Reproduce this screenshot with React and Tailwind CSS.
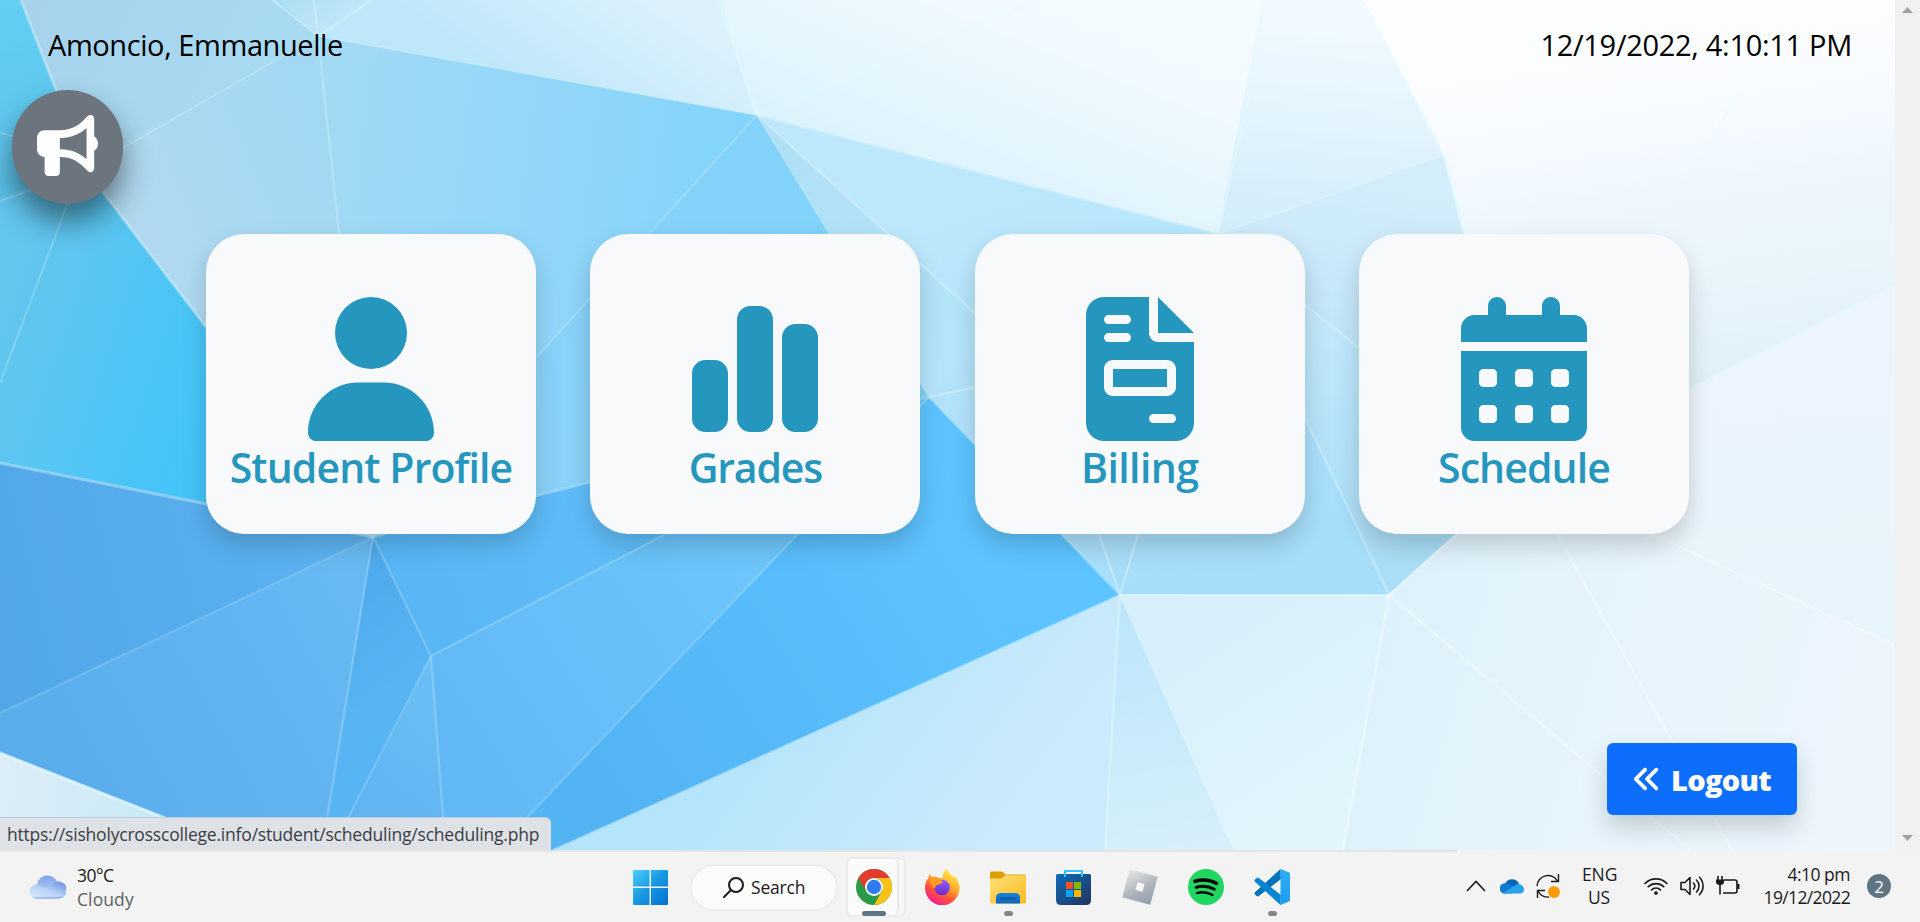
import React from "react";
import {
  FaUser,
  FaChartSimple,
  FaFileInvoice,
  FaCalendarDays,
  FaBullhorn,
  FaAnglesLeft,
} from "react-icons/fa6";

/* Facets of the low-poly wallpaper: points, gradient vector, gradient stops */
const FACETS = [
  { p: "-5,-5 21,-5 21,0 56,90 82,165 0,205 -5,205", g: [0, 0, 40, 200], c: ["#63cff4", "#5cc1ea"] },
  { p: "-5,200 82,165 210,332 210,504 0,463 -5,463", g: [0, 330, 205, 400], c: ["#62c6ef", "#45c4f8"] },
  { p: "21,-5 273,-5 318,36 123,148 82,165 56,90 21,0", g: [40, 0, 240, 100], c: ["#a6d3eb", "#a8daf2"] },
  { p: "82,165 318,36 345,260 373,537 210,505 206,327", g: [110, 250, 340, 150], c: ["#b2d9ef", "#a2d8f4"] },
  { p: "318,36 757,115 373,537 345,260", g: [330, 150, 740, 200], c: ["#a2d9f5", "#83d4fb"] },
  { p: "757,115 929,397 373,537", g: [830, 250, 540, 430], c: ["#82d2fa", "#8ad2f8"] },
  { p: "273,-5 314,-5 318,36", g: [273, 0, 318, 36], c: ["#a9ddf3", "#bfe6f6"] },
  { p: "314,-5 376,-5 318,36", g: [314, 0, 340, 30], c: ["#b2e1f6", "#c0e7f8"] },
  { p: "372,-5 719,-5 719,0 757,115 318,36", g: [640, -10, 560, 110], c: ["#dcf1fc", "#bfe7fa"] },
  { p: "719,-5 1264,-5 1218,234 757,115", g: [1040, 0, 960, 200], c: ["#f4fbff", "#dbf2fc"] },
  { p: "1264,-5 1363,-5 1363,0 1444,155 1218,234", g: [1320, 0, 1300, 210], c: ["#f4fbff", "#d5eefb"] },
  { p: "1218,234 1444,155 1464,233 1540,460 1389,595", g: [1400, 180, 1340, 560], c: ["#d4edfa", "#a6dcf7"] },
  { p: "757,115 1218,234 1389,595 1120,595 929,397", g: [1010, 170, 1150, 590], c: ["#bde8fc", "#a6ddfa"] },
  { p: "1218,234 1389,595 1500,495 1359,348", g: [1280, 250, 1360, 560], c: ["#cdecfa", "#b8e4fa", "#a9def6"] },
  { p: "757,115 920,263 990,327 929,397", g: [780, 150, 950, 350], c: ["#b0e0f6", "#b4e5fb"] },
  { p: "1363,-5 1900,-5 1900,284 1689,389 1540,460 1464,233 1444,155 1363,0", g: [1580, 0, 1640, 400], c: ["#fefeff", "#f9fcfe", "#eff7fe", "#e9f4fb", "#def1f7"] },
  { p: "1900,284 1900,860 1342,860 1389,595 1540,460 1689,389", g: [1380, 560, 1870, 700], c: ["#dcf1fa", "#e6f4fb", "#edf5fd"] },
  { p: "1900,284 1900,645 1651,534 1600,430 1689,389", g: [1780, 340, 1800, 600], c: ["#edf5fe", "#e8f4fb"] },
  { p: "1120,595 1389,595 1342,860 1238,860", g: [1150, 610, 1310, 850], c: ["#d6effb", "#e2f5fc"] },
  { p: "1120,595 1238,860 1104,860", g: [1130, 620, 1170, 850], c: ["#bde6fb", "#d6effa"] },
  { p: "1120,595 1104,860 530,862", g: [780, 700, 980, 850], c: ["#b5e5fb", "#cbeafb"] },
  { p: "929,397 1120,595 551,851 530,862 480,862 525,818", g: [600, 760, 980, 520], c: ["#53b4f4", "#5dc4ff"] },
  { p: "373,537 929,397 664,535 431,656", g: [400, 560, 760, 470], c: ["#59b6f5", "#62c1fb"] },
  { p: "431,656 664,535 929,397 525,818 485,860 446,860", g: [450, 750, 740, 560], c: ["#62b8f4", "#6dc5fb"] },
  { p: "431,656 446,860 330,860", g: [380, 800, 440, 720], c: ["#62b5f1", "#69bcf4"] },
  { p: "373,537 431,656 330,860 322,860", g: [350, 600, 410, 680], c: ["#50abec", "#58b5f4"] },
  { p: "373,537 322,860 270,860 0,753 -5,753 -5,714 0,713", g: [60, 760, 350, 600], c: ["#5aaceb", "#67b9f3"] },
  { p: "-5,462 0,463 206,503 373,537 0,713 -5,715", g: [0, 600, 330, 520], c: ["#52a7e8", "#5cb2f0"] },
  { p: "-5,751 0,753 165,818 250,860 -5,860", g: [0, 800, 160, 830], c: ["#dcedf8", "#c8e9f5"] },
];

/* Bright ridges between facets: x1, y1, x2, y2, opacity, width */
const RIDGES = [
  [21, 0, 56, 90, 0.35, 3],
  [56, 90, 82, 165, 0.35, 2],
  [82, 165, 206, 327, 0.35, 3],
  [82, 165, 0, 383, 0.25, 2],
  [0, 201, 82, 172, 0.25, 2],
  [0, 133, 30, 140, 0.25, 2],
  [273, 0, 318, 36, 0.45, 2],
  [314, 0, 318, 36, 0.4, 2],
  [372, 0, 318, 36, 0.45, 2],
  [318, 36, 123, 148, 0.25, 2],
  [318, 36, 339, 233, 0.3, 2],
  [318, 36, 757, 115, 0.2, 2],
  [719, 0, 757, 115, 0.6, 3],
  [757, 115, 1040, 0, 0.3, 3],
  [757, 115, 373, 537, 0.25, 2],
  [757, 115, 929, 397, 0.12, 2],
  [757, 115, 990, 327, 0.4, 2.5],
  [757, 115, 1218, 234, 0.3, 3],
  [1218, 234, 1252, 80, 0.45, 3],
  [1252, 80, 1264, 0, 0.3, 3],
  [1218, 234, 1444, 155, 0.4, 2],
  [1363, 0, 1444, 155, 0.3, 3],
  [1444, 155, 1464, 233, 0.75, 3],
  [1218, 234, 1389, 595, 0.35, 2.5],
  [1218, 234, 1359, 348, 0.35, 2.5],
  [1660, 233, 1740, 90, 0.3, 3],
  [1689, 389, 1895, 286, 0.5, 2.5],
  [929, 397, 1010, 380, 0.4, 2.5],
  [929, 397, 1120, 595, 0.35, 2.5],
  [1120, 595, 1099, 534, 0.45, 2],
  [1120, 595, 1138, 534, 0.45, 2],
  [1120, 595, 1389, 595, 0.6, 2],
  [1120, 595, 1234, 850, 0.4, 2],
  [1120, 595, 1105, 850, 0.45, 2.5],
  [1120, 595, 551, 851, 0.45, 2],
  [1389, 595, 1457, 534, 0.6, 2.5],
  [1389, 595, 1343, 850, 0.45, 3],
  [1389, 595, 1690, 850, 0.45, 3],
  [1557, 534, 1732, 850, 0.5, 3],
  [1651, 534, 1895, 645, 0.5, 3],
  [373, 537, 929, 397, 0.35, 2.5],
  [0, 463, 373, 537, 0.4, 3],
  [373, 537, 0, 713, 0.18, 2],
  [373, 537, 325, 830, 0.22, 2],
  [373, 537, 431, 656, 0.25, 2],
  [431, 656, 664, 535, 0.25, 2],
  [431, 656, 343, 828, 0.25, 2],
  [431, 656, 444, 830, 0.25, 2],
  [929, 397, 515, 830, 0.25, 2],
  [0, 753, 175, 822, 0.7, 3],
];

function Wallpaper() {
  return (
    <svg
      className="absolute inset-0 h-full w-full"
      viewBox="0 0 1895 850"
      preserveAspectRatio="none"
      aria-hidden="true"
    >
      <defs>
        <filter id="soft" x="0" y="0" width="1" height="1">
          <feGaussianBlur stdDeviation="0.7" />
        </filter>
        {FACETS.map((f, i) => (
          <linearGradient
            key={i}
            id={`facet${i}`}
            gradientUnits="userSpaceOnUse"
            x1={f.g[0]}
            y1={f.g[1]}
            x2={f.g[2]}
            y2={f.g[3]}
          >
            {f.c.map((c, j) => (
              <stop key={j} offset={j / (f.c.length - 1)} stopColor={c} />
            ))}
          </linearGradient>
        ))}
      </defs>
      <rect width="1895" height="850" fill="#a9dcf6" />
      <g filter="url(#soft)">
        {FACETS.map((f, i) => (
          <polygon key={i} points={f.p} fill={`url(#facet${i})`} stroke={`url(#facet${i})`} strokeWidth="0.8" />
        ))}
        {RIDGES.map(([x1, y1, x2, y2, o, w], i) => (
          <line key={i} x1={x1} y1={y1} x2={x2} y2={y2} stroke={x1 > 1380 && y1 > 500 ? "#f4fcff" : "#e2fbff"} strokeOpacity={o} strokeWidth={w} />
        ))}
      </g>
    </svg>
  );
}

const CARDS = [
  { label: "Student Profile", Icon: FaUser, track: "tracking-[-0.9px]" },
  { label: "Grades", Icon: FaChartSimple, track: "tracking-[-1.2px]" },
  { label: "Billing", Icon: FaFileInvoice, track: "tracking-[-0.6px]" },
  { label: "Schedule", Icon: FaCalendarDays, track: "tracking-[-0.9px]" },
];

function MenuCard({ label, Icon, track }) {
  return (
    <a className="flex h-[300px] w-[330px] flex-col items-center rounded-[38px] bg-[#f8f9fa] pt-[63px] text-[#2596be] shadow-[0_12px_24px_rgba(0,0,0,0.17)]">
      <Icon className="h-[144px] w-auto shrink-0" />
      <span className={`-mt-px whitespace-nowrap text-[41px] leading-[54px] font-semibold ${track}`}>{label}</span>
    </a>
  );
}

function ScrollBar() {
  return (
    <div className="flex w-[25px] flex-col items-center justify-between bg-[#f1f1f1] pt-[7px] pb-[9px]">
      <svg width="11" height="6" viewBox="0 0 11 6"><path d="M5.5 0 11 6H0z" fill="#a3a3a3" /></svg>
      <svg width="11" height="6" viewBox="0 0 11 6"><path d="M5.5 6 11 0H0z" fill="#a3a3a3" /></svg>
    </div>
  );
}

function CloudIcon() {
  return (
    <svg width="36" height="24" viewBox="0 0 36 24">
      <defs>
        <linearGradient id="cl1" x1="0" y1="0" x2="0" y2="1">
          <stop offset="0" stopColor="#7fa4e8" />
          <stop offset="1" stopColor="#c4daf8" />
        </linearGradient>
        <linearGradient id="cl2" x1="1" y1="0" x2="0.2" y2="1">
          <stop offset="0" stopColor="#5f8bdd" />
          <stop offset="0.6" stopColor="#bcd4f7" />
          <stop offset="1" stopColor="#d3e4fb" />
        </linearGradient>
      </defs>
      <path d="M7 23.5a7 7 0 0 1 0-14A10.5 10.5 0 0 1 27.500 8L28 23.500z" fill="url(#cl1)" />
      <path d="M7 23.500a7 7 0 1 1 5-12l8 3a8.500 8.500 0 1 1 7.500 9z" fill="url(#cl2)" />
      <path d="M3 22q2 1.500 4 1.500h20q5 0 7-3-3 2-7 2H7q-2 0-4-.500z" fill="#7ba0e6" />
    </svg>
  );
}

function StartIcon() {
  return (
    <svg width="35" height="35" viewBox="0 0 35 35">
      <defs>
        <linearGradient id="win" gradientUnits="userSpaceOnUse" x1="0" y1="0" x2="35" y2="35">
          <stop offset="0" stopColor="#4bd0fb" />
          <stop offset="0.5" stopColor="#1797e3" />
          <stop offset="1" stopColor="#0070d0" />
        </linearGradient>
      </defs>
      <path d="M1 0h15.500v16.500H0V1a1 1 0 0 1 1-1zM18 0h16a1 1 0 0 1 1 1v15.500H18zM0 18h16.500v17H1a1 1 0 0 1-1-1zM18 18h17v16a1 1 0 0 1-1 1H18z" fill="url(#win)" />
    </svg>
  );
}

function ChromeIcon() {
  return (
    <svg width="36" height="36" viewBox="0 0 36 36" className="shrink-0">
      <circle cx="18" cy="18" r="18" fill="#2b9a48" />
      <path d="M2.400 9A18 18 0 0 1 33.600 9H18a9 9 0 0 0-7.800 13.500z" fill="#e33b2e" />
      <path d="M33.600 9A18 18 0 0 1 18 36l7.800-13.500A9 9 0 0 0 18 9z" fill="#fcc117" />
      <circle cx="18" cy="18" r="9" fill="#fff" />
      <circle cx="18" cy="18" r="7.200" fill="#2f7cf0" />
    </svg>
  );
}

function FirefoxIcon() {
  return (
    <svg width="35" height="36" viewBox="0 0 35 36">
      <defs>
        <linearGradient id="ff1" x1="0.800" y1="0.050" x2="0.250" y2="1">
          <stop offset="0" stopColor="#fff14a" />
          <stop offset="0.350" stopColor="#ffb02e" />
          <stop offset="0.650" stopColor="#ff5636" />
          <stop offset="1" stopColor="#f5149a" />
        </linearGradient>
        <linearGradient id="ff2" x1="0.600" y1="0" x2="0.400" y2="1">
          <stop offset="0" stopColor="#9059ff" />
          <stop offset="1" stopColor="#6a2bc4" />
        </linearGradient>
      </defs>
      <path d="M22 0c1 3 4 5 6 8l2-1c3 4 4.500 8 4.500 12A17.200 17.200 0 0 1 0 19c0-4 1-7.500 3.500-10l.500-4 3 3c2-.500 4-.500 6 1l5 0c-1-4 1-7 4-9z" fill="url(#ff1)" />
      <circle cx="17" cy="18.500" r="7.800" fill="url(#ff2)" />
      <path d="M5 9c3-2 6-1.500 9 .500l4 3.500c-1 2-4 2-6 3-2 1-1 3-3 3-3-2-5-6-4-10z" fill="#ff9a24" />
    </svg>
  );
}

function ExplorerIcon() {
  return (
    <svg width="36" height="33" viewBox="0 0 36 33">
      <defs>
        <linearGradient id="ex" x1="0" y1="0" x2="1" y2="1">
          <stop offset="0" stopColor="#ffe07a" />
          <stop offset="1" stopColor="#fbbc1f" />
        </linearGradient>
        <linearGradient id="ex2" x1="0" y1="0" x2="0" y2="1">
          <stop offset="0" stopColor="#1682dc" />
          <stop offset="1" stopColor="#0f66b8" />
        </linearGradient>
      </defs>
      <path d="M0 2a1.500 1.500 0 0 1 1.500-1.500H11q1.500 0 2.500 1L15.500 3.500H34.500Q36 3.500 36 5v6H0z" fill="#dea004" />
      <path d="M0 7.500h10q2 0 3-1.200l1-1Q15 4.300 16.500 4.300H36V31q0 1.500-1.500 1.500h-33Q0 32.500 0 31z" fill="url(#ex)" />
      <path d="M6 32.500V27q0-5 5-5h14q5 0 5 5v5.500z" fill="url(#ex2)" />
      <path d="M11 27.500h14" stroke="#0b4f94" strokeWidth="1.500" strokeLinecap="round" />
    </svg>
  );
}

function StoreIcon() {
  return (
    <svg width="35" height="36" viewBox="0 0 35 36" className="mr-px">
      <defs>
        <linearGradient id="st" x1="0" y1="0" x2="1" y2="1">
          <stop offset="0" stopColor="#0f6cb8" />
          <stop offset="1" stopColor="#22335f" />
        </linearGradient>
      </defs>
      <path d="M1.500 5h32Q35 5 35 6.500V31q0 5-5 5H5q-5 0-5-5V6.500Q0 5 1.500 5z" fill="url(#st)" />
      <path d="M9 8V2h17v6" stroke="#2fc3f7" strokeWidth="2" fill="none" strokeLinejoin="round" />
      <path d="M10 13h7v7h-7z" fill="#f25022" />
      <path d="M18 13h7v7h-7z" fill="#7fba00" />
      <path d="M10 21h7v7h-7z" fill="#00a4ef" />
      <path d="M18 21h7v7h-7z" fill="#ffb900" />
    </svg>
  );
}

function RobloxIcon() {
  return (
    <svg width="36" height="36" viewBox="0 0 36 36">
      <defs>
        <linearGradient id="rb" x1="0.200" y1="0" x2="0.700" y2="1">
          <stop offset="0" stopColor="#e9e9ea" />
          <stop offset="0.550" stopColor="#b0b6bd" />
          <stop offset="1" stopColor="#8f9dac" />
        </linearGradient>
      </defs>
      <path d="M7.500.300 35.700 7.800 28.200 35.700.300 28.200z" fill="url(#rb)" />
      <path d="M15.700 13.300 22.500 15.100 20.500 22.700 13.500 20.700z" fill="#fbfbfb" />
    </svg>
  );
}

function SpotifyIcon() {
  return (
    <svg width="36" height="36" viewBox="0 0 36 36" fill="none" stroke="#050505" strokeLinecap="round">
      <circle cx="18" cy="18" r="18" fill="#1fd760" stroke="none" />
      <path d="M7 12.300c7-2 15.500-1.300 21.500 2" strokeWidth="3.600" />
      <path d="M8 18.300c6-1.700 13-1 18.400 1.900" strokeWidth="2.900" />
      <path d="M8.800 24c5-1.300 11-.800 15.800 1.900" strokeWidth="2.300" />
    </svg>
  );
}

function VsCodeIcon() {
  return (
    <svg width="36" height="36" viewBox="0 0 36 36">
      <defs>
        <linearGradient id="vs" x1="0" y1="0" x2="0" y2="1">
          <stop offset="0" stopColor="#2bb0f5" />
          <stop offset="1" stopColor="#1f9cf0" />
        </linearGradient>
      </defs>
      <path d="M26.500 0 1 23.200q-1 1.200 0 2.200l1.600 1.600q1 .800 2.200 0L27 10z" fill="#0273ba" />
      <path d="M26.500 36 1 12.800q-1-1.200 0-2.200L2.600 9q1-.800 2.200 0L27 26z" fill="#0785d0" />
      <path d="M26.500 0 36 3.800V32l-9.500 4q-.8 0 0-1.500V1.500z" fill="url(#vs)" />
    </svg>
  );
}

function TaskItem({ children, dot }) {
  return (
    <div className="flex h-[60px] w-[66px] flex-col items-center pt-[11px]">
      <div className="flex h-[36px] items-center">{children}</div>
      {dot && <div className="mt-[6px] h-[5px] w-[9px] rounded-full bg-[#868686]" />}
    </div>
  );
}

function TaskBar() {
  return (
    <footer className="h-[72px] bg-[#f3f3f3] text-[18px] text-[#1b1b1b]">
      <div className="h-[2px] w-[1457px] bg-[#e4e4e4]" />
      <div className="flex h-[70px] items-start">
        <div className="flex w-[633px] items-start pl-[30px]">
          <div className="pt-[23px]"><CloudIcon /></div>
          <div className="ml-[11px] pt-[11px] leading-[24px]">
            <div className="text-[17.500px] tracking-[-0.5px]">30°C</div>
            <div className="text-[17.500px] tracking-[0.1px] text-[#5f5f5f]">Cloudy</div>
          </div>
        </div>
        <div className="pt-[18px]"><StartIcon /></div>
        <div className="mt-[12px] ml-[22px] flex h-[47px] w-[148px] items-center rounded-full border-2 border-[#ececec] bg-[#fbfbfb] pl-[31px]">
          <svg width="21" height="21" viewBox="0 0 21 21" fill="none" stroke="#1b1b1b" strokeWidth="2">
            <circle cx="13" cy="8" r="7" />
            <path d="M8 13 1 20" strokeLinecap="round" />
          </svg>
          <span className="ml-[7px] text-[17.500px] tracking-[-0.2px]">Search</span>
        </div>
        <div className="mt-[5px] ml-[8px] flex h-[60px] w-[60px] rounded-[6px] border-2 border-[#ebebeb] bg-[#f6f6f6]">
          <div className="flex w-[51px] flex-col items-center rounded-[6px] border-r-2 border-[#e9e9e9] bg-[#fbfbfb] pt-[10px] pl-[3px]">
            <ChromeIcon />
            <div className="mt-[6px] h-[5px] w-[24px] shrink-0 rounded-full bg-[#607583]" />
          </div>
        </div>
        <div className="mt-[6px] ml-[3px] flex">
          <TaskItem><FirefoxIcon /></TaskItem>
          <TaskItem dot><ExplorerIcon /></TaskItem>
          <TaskItem><StoreIcon /></TaskItem>
          <TaskItem><RobloxIcon /></TaskItem>
          <TaskItem><SpotifyIcon /></TaskItem>
          <TaskItem dot><VsCodeIcon /></TaskItem>
        </div>
        <div className="ml-auto flex h-[68px] items-center pr-[29px]">
          <svg width="20" height="12" viewBox="0 0 20 12" fill="none" stroke="#1b1b1b" strokeWidth="1.600" className="mr-[14px]">
            <path d="M1 11 10 1.500 19 11" />
          </svg>
          <svg width="24" height="16" viewBox="0 0 24 16" className="mr-[12px]">
            <path d="M5 6a7.500 7.500 0 0 1 14 0l-4 5-8-3z" fill="#0864b8" />
            <path d="M5 15.500A5 5 0 0 1 4.500 5.300Q8 4.500 10 6.500L18 10l-6 5.500z" fill="#0f78d4" />
            <path d="M3 15 16 6.800Q18 5.500 20.500 6.500 24 8 24 11.500q0 4-4.500 4H5q-1.200 0-2-.500z" fill="#27a3ea" />
          </svg>
          <svg width="24" height="24" viewBox="0 0 24 24" fill="none" stroke="#1b1b1b" strokeWidth="1.400" className="mr-[22px]">
            <path d="M1 12A11 11 0 0 1 21.500 7M22.500 0v7.500H15M1.500 24v-7.500H9M2 17a11 11 0 0 0 11 6" />
            <circle cx="18" cy="18" r="6" fill="#ff9a0a" stroke="none" />
          </svg>
          <div className="mr-[28px] w-[34px] text-center text-[17.500px] leading-[23px] tracking-[-0.1px]">
            <div>ENG</div>
            <div>US</div>
          </div>
          <svg width="24" height="18" viewBox="0 0 24 18" fill="none" stroke="#1b1b1b" strokeWidth="1.700" strokeLinecap="round" className="mr-[12px]">
            <path d="M1 6.500a15.500 15.500 0 0 1 22 0M4.300 9.700a11 11 0 0 1 15.400 0M7.600 12.800a6.300 6.300 0 0 1 8.800 0" />
            <circle cx="12" cy="16" r="1.300" fill="#1b1b1b" stroke="none" />
            <circle cx="12" cy="16" r="1" />
          </svg>
          <svg width="24" height="20" viewBox="0 0 24 20" fill="none" stroke="#1b1b1b" strokeWidth="1.600" strokeLinecap="round" strokeLinejoin="round" className="mr-[12px]">
            <path d="M1 6.500h4l5-5v17l-5-5H1z" />
            <path d="M13.500 7a4.500 4.500 0 0 1 0 6M16.500 4a8.500 8.500 0 0 1 0 12M19.500 1.300a12.500 12.500 0 0 1 0 17.400" />
          </svg>
          <svg width="24" height="20" viewBox="0 0 24 20" fill="none" stroke="#1b1b1b" strokeWidth="1.600" className="mr-[22px]">
            <path d="M8 4h11q2 0 2 2v9q0 2-2 2H7M4 8v10.500" />
            <path d="M2 0v4M6 0v4" />
            <path d="M0 3.500h8V6q0 3-4 3T0 6z" fill="#1b1b1b" stroke="none" />
            <path d="M21 8h2.500v5H21z" fill="#1b1b1b" stroke="none" />
          </svg>
          <div className="mr-[17px] w-[88px] text-right text-[17.500px] leading-[23px] whitespace-nowrap">
            <div className="tracking-[-0.500px]">4:10 pm</div>
            <div className="-ml-[10px] tracking-[-0.650px]">19/12/2022</div>
          </div>
          <div className="flex h-[24px] w-[24px] items-center justify-center rounded-full bg-[#607583] text-[17px] leading-none text-white">2</div>
        </div>
      </div>
    </footer>
  );
}

export default function App() {
  return (
    <div className="h-[922px] w-[1920px] overflow-hidden font-['Open_Sans','Noto_Sans',sans-serif]">
      <div className="flex h-[850px]">
        <main className="relative flex w-[1895px] flex-col overflow-hidden">
          <Wallpaper />
          <header className="relative flex h-[90px] items-start justify-between pt-[22px] pr-[43px] pl-[48px] text-[29px] leading-[45px] text-black">
            <span className="tracking-[-0.42px]">Amoncio, Emmanuelle</span>
            <span className="tracking-[-0.3px]">12/19/2022, 4:10:11 PM</span>
          </header>
          <button className="relative ml-[12px] flex h-[114px] w-[111px] items-center justify-center rounded-full bg-[#6c757d] pb-[3px] text-white shadow-[0_18px_30px_rgba(0,0,0,0.47)]">
            <FaBullhorn className="h-[61px] w-[61px]" />
          </button>
          <nav className="relative mt-[30px] flex justify-between pr-[206px] pl-[206px]">
            {CARDS.map((c) => (
              <MenuCard key={c.label} {...c} />
            ))}
          </nav>
          <button className="relative mt-[209px] mr-[98px] flex h-[72px] w-[190px] items-center self-end rounded-[6px] bg-[#0d6efd] pl-[25px] text-white shadow-[0_12px_24px_rgba(0,0,0,0.17)]">
            <FaAnglesLeft className="h-[30px] w-auto" />
            <span className="mt-[2px] ml-[9px] text-[29px] leading-[44px] font-extrabold tracking-[-0.7px]">Logout</span>
          </button>
          <div className="absolute bottom-0 left-0 flex h-[33px] w-[551px] items-center rounded-tr-[6px] border-t border-[#b8cfe2] bg-[#dee1e6] pl-[7px] text-[17.500px] tracking-[-0.200px] whitespace-nowrap text-[#3c4043]">
            https://sisholycrosscollege.info/student/scheduling/scheduling.php
          </div>
        </main>
        <ScrollBar />
      </div>
      <TaskBar />
    </div>
  );
}
